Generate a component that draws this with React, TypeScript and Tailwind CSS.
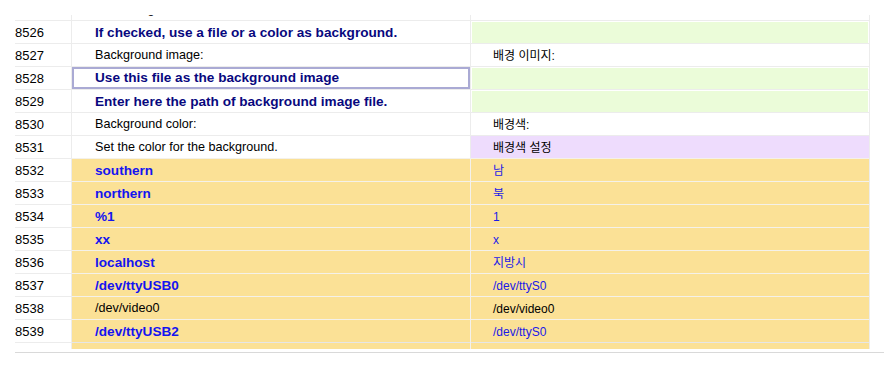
import React from "react";
import clsx from "clsx";

type Row = {
  n: number;
  src: string;
  dst: string;
  kind: "plain" | "new" | "fuzzy" | "changed";
  srcStyle?: "bold" | "boldBlue";
  dstBlue?: boolean;
  selected?: boolean;
};

const rows: Row[] = [
  { n: 8525, src: "Use background", dst: "", kind: "plain" },
  { n: 8526, src: "If checked, use a file or a color as background.", dst: "", kind: "new", srcStyle: "bold" },
  { n: 8527, src: "Background image:", dst: "배경 이미지:", kind: "plain" },
  { n: 8528, src: "Use this file as the background image", dst: "", kind: "new", srcStyle: "bold", selected: true },
  { n: 8529, src: "Enter here the path of background image file.", dst: "", kind: "new", srcStyle: "bold" },
  { n: 8530, src: "Background color:", dst: "배경색:", kind: "plain" },
  { n: 8531, src: "Set the color for the background.", dst: "배경색 설정", kind: "changed" },
  { n: 8532, src: "southern", dst: "남", kind: "fuzzy", srcStyle: "boldBlue", dstBlue: true },
  { n: 8533, src: "northern", dst: "북", kind: "fuzzy", srcStyle: "boldBlue", dstBlue: true },
  { n: 8534, src: "%1", dst: "1", kind: "fuzzy", srcStyle: "boldBlue", dstBlue: true },
  { n: 8535, src: "xx", dst: "x", kind: "fuzzy", srcStyle: "boldBlue", dstBlue: true },
  { n: 8536, src: "localhost", dst: "지방시", kind: "fuzzy", srcStyle: "boldBlue", dstBlue: true },
  { n: 8537, src: "/dev/ttyUSB0", dst: "/dev/ttyS0", kind: "fuzzy", srcStyle: "boldBlue", dstBlue: true },
  { n: 8538, src: "/dev/video0", dst: "/dev/video0", kind: "fuzzy" },
  { n: 8539, src: "/dev/ttyUSB2", dst: "/dev/ttyS0", kind: "fuzzy", srcStyle: "boldBlue", dstBlue: true },
  { n: 8540, src: "/dev/video1", dst: "/dev/video1", kind: "fuzzy" },
];

const font = "font-['Liberation_Sans','Noto_Sans_CJK_KR',sans-serif]";

const TableRow = ({ row, last }: { row: Row; last: boolean }) => {
  const fuzzy = row.kind === "fuzzy";
  const line = last ? "border-[#e6e6e6]" : fuzzy ? "border-[#f4f1ea]" : "border-[#ececec]";

  return (
    <div className="flex h-[23px] leading-none">
      {/* line number */}
      <div className="flex w-[56px] items-center border-t border-[#ececec] bg-white pt-px text-[13px] text-black">
        {row.n}
      </div>
      <div className="w-px bg-[#ececec]" />

      {/* source text */}
      <div className={clsx("w-[398px] border-t", line, fuzzy ? "bg-[#fbe196]" : "bg-white")}>
        <div
          className={clsx(
            "flex h-full items-center whitespace-nowrap",
            row.selected ? "border-2 border-[#aaaad4] pl-[21px]" : "pl-[23px] pt-px",
            row.srcStyle === "bold" && "text-[13.6px] font-bold text-[#08087e]",
            row.srcStyle === "boldBlue" && "text-[13.6px] font-bold text-[#1414f0]",
            !row.srcStyle && "text-[12.6px] text-black"
          )}
        >
          {row.src}
        </div>
      </div>
      <div className={clsx("w-px", fuzzy ? "bg-[#f3f1ec]" : "bg-[#ececec]")} />

      {/* translation */}
      <div
        className={clsx(
          "w-[398px] border-t",
          line,
          fuzzy && "bg-[#fbe196]",
          row.kind === "changed" && "bg-[#eedcfd]",
          row.kind === "new" && "bg-white px-px pt-px",
          row.kind === "plain" && "bg-white"
        )}
      >
        <div
          className={clsx(
            "flex h-full items-center whitespace-nowrap pt-px text-[12px]",
            row.kind === "new" ? "bg-[#ebfcd9] pl-[21px]" : "pl-[22px]",
            row.dstBlue ? "text-[#1a1ae8]" : "text-black"
          )}
        >
          {row.dst}
        </div>
      </div>
      <div className="w-px bg-[#ececec]" />
    </div>
  );
};

export default function App() {
  return (
    <div className={clsx("h-[368px] w-[884px] overflow-hidden bg-white pl-[15px] pt-[15px]", font)}>
      {/* scrolled list */}
      <div className="h-[334px] overflow-hidden">
        <div className="-mt-[18px]">
          {rows.map((r, i) => (
            <TableRow key={r.n} row={r} last={i === rows.length - 1} />
          ))}
        </div>
      </div>
      <div className="mt-[3px] h-px bg-[#d9d9d9]" />
    </div>
  );
}
